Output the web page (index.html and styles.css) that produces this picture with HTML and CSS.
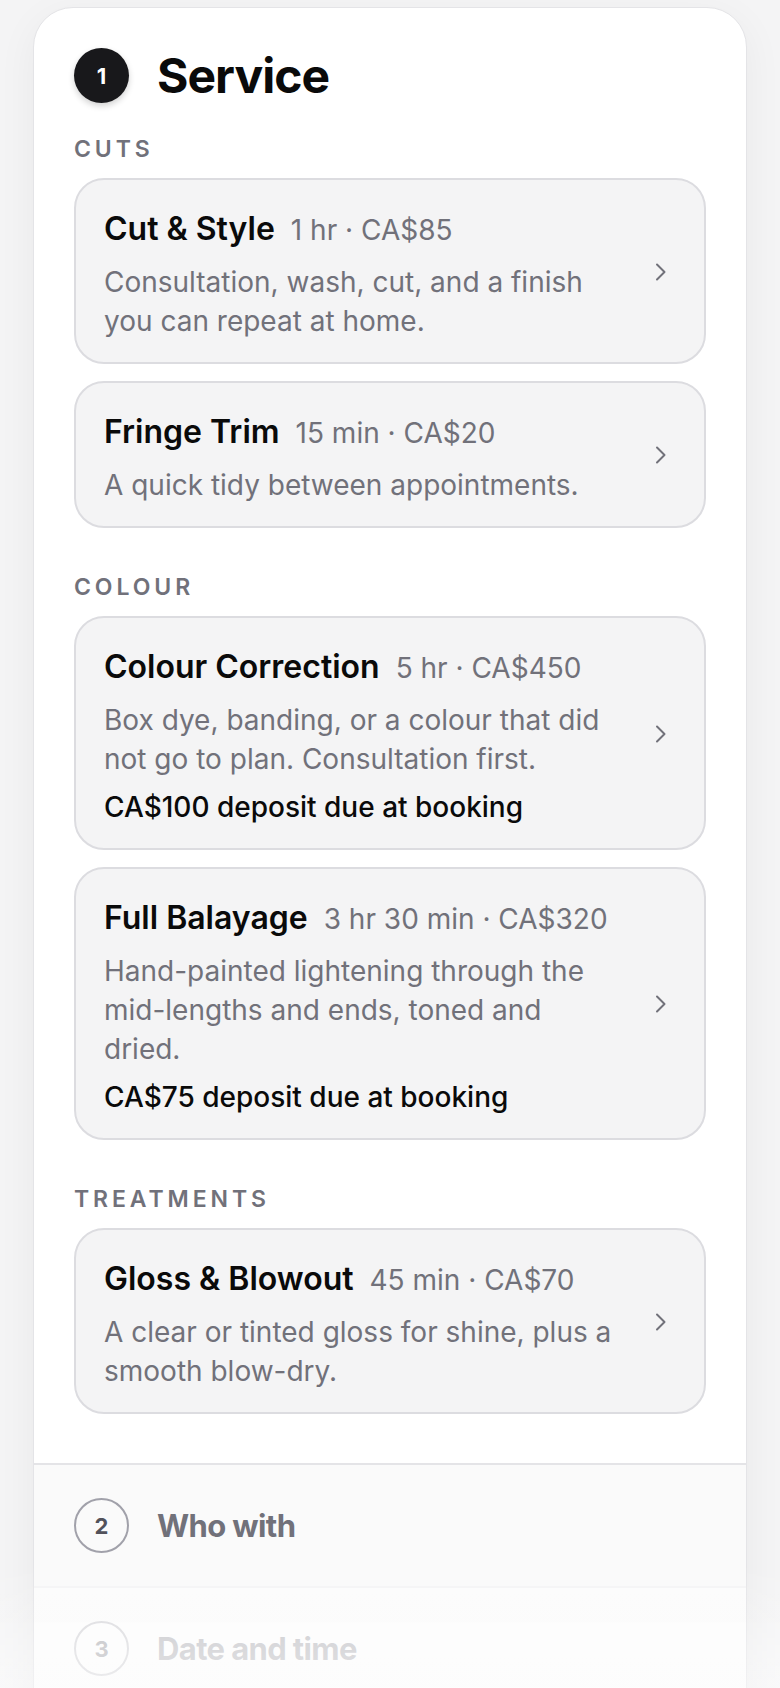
FILE: index.html
```html
<!DOCTYPE html>
<html lang="en">
<head>
  <meta charset="UTF-8">
  <meta name="viewport" content="width=device-width, initial-scale=1.0">
  <title>Book an appointment</title>
  <link rel="stylesheet" href="styles.css">
</head>
<body>

<main class="booking">
  <section class="step step-open">
    <header class="step-head">
      <span class="step-num">1</span>
      <h1 class="step-title">Service</h1>
    </header>

    <div id="service-groups">
      <!-- Service groups are rendered here -->
    </div>
  </section>

  <section class="step step-row">
    <span class="step-num">2</span>
    <h2 class="step-title">Who with</h2>
  </section>

  <section class="step step-row step-later">
    <span class="step-num">3</span>
    <h2 class="step-title">Date and time</h2>
  </section>

  <section class="step step-row step-later">
    <span class="step-num">4</span>
    <h2 class="step-title">Your details</h2>
  </section>
</main>

<div class="fade"></div>

<script>
  const serviceGroups = [
    {
      name: 'Cuts',
      services: [
        { name: 'Cut & Style', meta: '1 hr · CA$85', desc: 'Consultation, wash, cut, and a finish you can repeat at home.' },
        { name: 'Fringe Trim', meta: '15 min · CA$20', desc: 'A quick tidy between appointments.' },
      ],
    },
    {
      name: 'Colour',
      services: [
        { name: 'Colour Correction', meta: '5 hr · CA$450', desc: 'Box dye, banding, or a colour that did not go to plan. Consultation first.', deposit: 'CA$100' },
        { name: 'Full Balayage', meta: '3 hr 30 min · CA$320', desc: 'Hand-painted lightening through the mid-lengths and ends, toned and dried.', deposit: 'CA$75' },
      ],
    },
    {
      name: 'Treatments',
      services: [
        { name: 'Gloss & Blowout', meta: '45 min · CA$70', desc: 'A clear or tinted gloss for shine, plus a smooth blow-dry.' },
      ],
    },
  ];

  const chevron = '<svg class="chevron" width="12" height="18" viewBox="0 0 12 18" aria-hidden="true">' +
    '<path d="M2 1.5L9.5 9L2 16.5" fill="none" stroke="currentColor" stroke-width="2" stroke-linecap="round" stroke-linejoin="round"/></svg>';

  // Build one service card
  function serviceCard(service) {
    const deposit = service.deposit
      ? `<p class="service-deposit">${service.deposit} deposit due at booking</p>`
      : '';

    return `
      <li>
        <a class="service" href="#">
          <div class="service-body">
            <div class="service-top">
              <span class="service-name">${service.name.replace('&', '&amp;')}</span>
              <span class="service-meta">${service.meta}</span>
            </div>
            <p class="service-desc">${service.desc}</p>
            ${deposit}
          </div>
          ${chevron}
        </a>
      </li>`;
  }

  // Render every group with its label
  function renderGroups() {
    const container = document.getElementById('service-groups');
    container.innerHTML = serviceGroups.map(group => `
      <div class="group">
        <h3 class="group-label">${group.name}</h3>
        <ul class="services">${group.services.map(serviceCard).join('')}</ul>
      </div>`).join('');
  }

  renderGroups();
</script>

</body>
</html>
```

FILE: styles.css
```css
/* Reset */
* {
  margin: 0;
  padding: 0;
  box-sizing: border-box;
}

/* Page */
body {
  font-family: 'Inter', 'Liberation Sans', sans-serif;
  background-color: #f4f4f5;
  color: #0a0a0a;
  padding-top: 7px;
}

/* Booking card */
.booking {
  margin: 0 33px;
  background-color: #ffffff;
  border: 1px solid #e4e4e7;
  border-radius: 40px;
  box-shadow: 0 10px 40px rgba(0, 0, 0, 0.05);
  overflow: hidden;
}

/* Step heading */
.step-open {
  padding: 40px 40px 49px;
}

.step-head {
  display: flex;
  align-items: center;
  gap: 28px;
}

.step-num {
  width: 55px;
  height: 55px;
  flex-shrink: 0;
  display: flex;
  align-items: center;
  justify-content: center;
  border-radius: 50%;
  background-color: #18181b;
  color: #fff;
  font-size: 22px;
  font-weight: 700;
  box-shadow: 0 3px 6px rgba(0, 0, 0, 0.18);
}

.step-title {
  font-size: 48px;
  line-height: 55px;
  font-weight: 700;
  letter-spacing: -0.02em;
}

/* Groups */
.group-label {
  margin: 32px 0 15px;
  font-size: 23px;
  line-height: 28px;
  font-weight: 600;
  letter-spacing: 0.17em;
  text-transform: uppercase;
  color: #71717a;
}

.group + .group .group-label {
  margin-top: 45px;
}

.services {
  list-style: none;
  display: flex;
  flex-direction: column;
  gap: 17px;
}

/* Service card */
.service {
  display: flex;
  align-items: center;
  gap: 38px;
  padding: 30px 37px 21px 28px;
  background-color: #f4f4f5;
  border: 2px solid #dcdce0;
  border-radius: 30px;
  color: inherit;
  text-decoration: none;
}

.service-body {
  flex: 1;
}

.service-top {
  display: flex;
  align-items: baseline;
  gap: 16px;
  line-height: 38px;
}

.service-name {
  font-size: 32px;
  font-weight: 600;
}

.service-meta {
  font-size: 28px;
  color: #71717a;
}

.service-desc {
  margin-top: 14px;
  font-size: 28px;
  line-height: 39px;
  color: #71717a;
}

.service-deposit {
  margin-top: 9px;
  font-size: 28px;
  line-height: 39px;
  font-weight: 500;
}

.chevron {
  flex-shrink: 0;
  margin-top: -8px;
  color: #71717a;
}

/* Collapsed steps */
.step-row {
  display: flex;
  align-items: center;
  gap: 28px;
  padding: 33px 40px;
  background-color: #fafafa;
  border-top: 2px solid #e4e4e7;
}

.step-row .step-num {
  background-color: transparent;
  border: 2px solid #a1a1aa;
  color: #52525b;
  box-shadow: none;
}

.step-row .step-title {
  font-size: 31px;
  color: #71717a;
}

.step-later {
  opacity: 0.4;
}

/* Soft fade over the bottom of the screen */
.fade {
  position: fixed;
  left: 0;
  right: 0;
  bottom: 0;
  height: 130px;
  background: linear-gradient(to bottom, rgba(255, 255, 255, 0), rgba(255, 255, 255, 0.5));
  pointer-events: none;
}
```
